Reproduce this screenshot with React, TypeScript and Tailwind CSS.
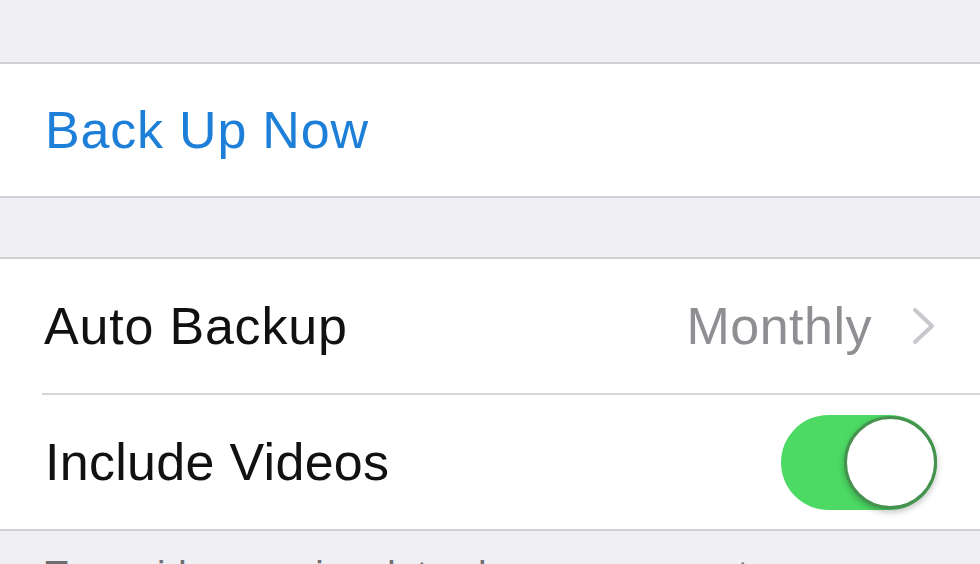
import React from "react";

export default function App() {
  const font = { fontFamily: '"Liberation Sans", Arial, sans-serif' };
  return (
    <div className="w-[980px] h-[564px] overflow-hidden bg-[#efeff4]" style={font}>
      <div className="h-[62px]" />
      <div className="h-[136px] bg-white border-y-2 border-[#cfcfd4] flex items-center pl-[45px]">
        <span className="text-[52px] leading-none tracking-[0.8px] text-[#1d7fd8]">Back Up Now</span>
      </div>
      <div className="h-[59px]" />
      <div className="bg-white border-y-2 border-[#cfcfd4]">
        <div className="h-[134px] flex items-center pl-[44px] pr-[44px]">
          <span className="text-[52px] leading-none tracking-[0.8px] text-[#111111]">Auto Backup</span>
          <span className="ml-auto text-[52px] leading-none tracking-[0.5px] text-[#8e8e93]">Monthly</span>
          <svg className="ml-[40px]" width="24" height="38" viewBox="0 0 24 38">
            <path d="M3 3 L20 19 L3 35" fill="none" stroke="#c7c7cc" strokeWidth="4" strokeLinecap="round" strokeLinejoin="round" />
          </svg>
        </div>
        <div className="ml-[42px] h-[2px] bg-[#d6d6da]" />
        <div className="h-[134px] flex items-center pl-[45px] pr-[43px]">
          <span className="text-[52px] leading-none tracking-[0.3px] text-[#111111]">Include Videos</span>
          <div className="ml-auto w-[156px] h-[95px] rounded-full bg-[#4cd964] flex items-center justify-end">
            <div className="w-[93px] h-[93px] rounded-full bg-white border-[3px] border-[#46924f] shadow-[0_3px_6px_rgba(0,0,0,0.25)]" />
          </div>
        </div>
      </div>
      <div className="pt-[25px] pl-[45px] text-[38px] leading-none text-[#6d6d72] whitespace-nowrap">
        To avoid excessive data charges, connect
      </div>
    </div>
  );
}
